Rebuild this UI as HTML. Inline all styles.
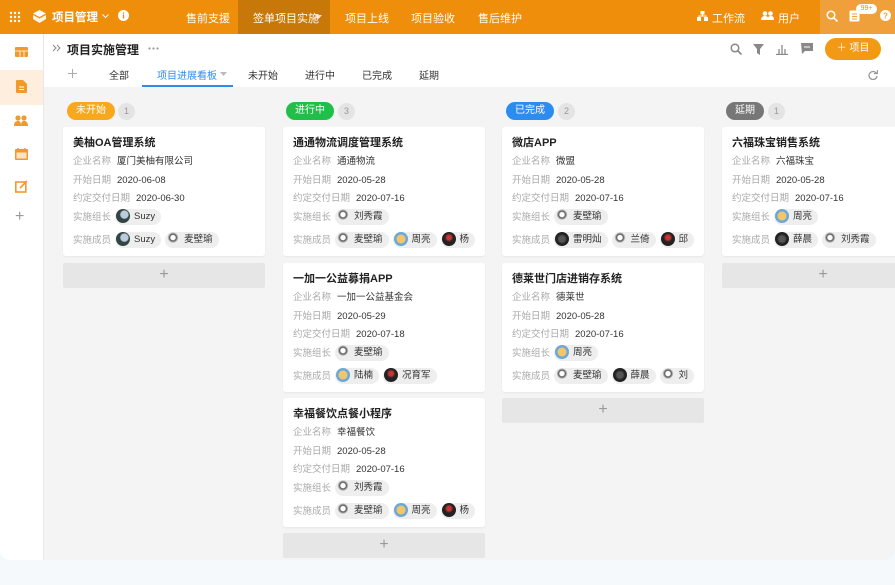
<!DOCTYPE html>
<html><head><meta charset="utf-8"><style>
*{margin:0;padding:0;box-sizing:border-box}
body{width:895px;height:585px;background:#f5f9fc;font-family:"Liberation Sans","Noto Sans CJK SC",sans-serif;position:relative;overflow:hidden;color:#333}
.win{position:absolute;left:0;top:0;width:895px;height:560px;background:#f4f4f4;border-radius:0 0 10px 10px;overflow:hidden}
.top{position:absolute;left:0;top:0;width:895px;height:34px;background:#ee8e0a;color:#fff;font-size:11px}
.top span{position:absolute;top:10px}
.side{position:absolute;left:0;top:34px;width:44px;height:526px;background:#fff;border-right:1px solid #e8e8e8}
.sub{position:absolute;left:44px;top:34px;width:851px;height:53px;background:#fff}
.a{position:absolute}
.pill{position:absolute;top:102px;height:18px;border-radius:9px;color:#fff;font-size:10px;line-height:18px;padding:0 9px}
.cnt{position:absolute;top:103px;width:17px;height:17px;border-radius:50%;background:#e4e4e4;color:#999;font-size:9px;text-align:center;line-height:17px}
.card{position:absolute;width:202px;height:129px;background:#fff;border-radius:3px;box-shadow:0 1px 2px rgba(0,0,0,.06)}
.card .t{position:absolute;left:10px;top:7px;font-size:11px;font-weight:bold;color:#222}
.card .r{position:absolute;left:10px;font-size:9.5px;color:#aaa;white-space:nowrap}
.card .r b{font-weight:normal;color:#333;margin-left:6px}
.chip{display:inline-block;height:16px;line-height:16px;background:#eee;border-radius:8px;padding:0 6px 0 1px;color:#333;font-size:9.5px;margin-left:4px;vertical-align:middle;white-space:nowrap}
.av{display:inline-block;width:14px;height:14px;border-radius:50%;vertical-align:middle;margin:-2px 4px 0 0}
.add{position:absolute;width:202px;height:25px;background:#e6e6e6;border-radius:2px;color:#999;font-size:16px;text-align:center;line-height:24px}
.r1{top:26px}.r2{top:45px}.r3{top:63px}.r4{top:82px}.r5{top:105px}
.g1{background:radial-gradient(circle at 60% 40%,#bcd 0 30%,#344 40%)}
.g2{background:radial-gradient(circle at 50% 40%,#fff 0 20%,#555 30%,#eee 50%)}
.g3{background:radial-gradient(circle,#f3c66a 0 40%,#6aa8d8 50%)}
.g4{background:radial-gradient(circle at 50% 40%,#c33 0 20%,#222 40%)}
.g5{background:radial-gradient(circle,#555 0 30%,#222 50%)}
</style></head><body>
<div class="win">
<div class="top">
<svg class="a" style="left:9px;top:11px" width="12" height="12"><g fill="#fff"><circle cx="2" cy="2" r="1.2"/><circle cx="6" cy="2" r="1.2"/><circle cx="10" cy="2" r="1.2"/><circle cx="2" cy="6" r="1.2"/><circle cx="6" cy="6" r="1.2"/><circle cx="10" cy="6" r="1.2"/><circle cx="2" cy="10" r="1.2"/><circle cx="6" cy="10" r="1.2"/><circle cx="10" cy="10" r="1.2"/></g></svg>
<svg class="a" style="left:32px;top:9px" width="15" height="15"><path d="M7.5 1L14 4.5 7.5 8 1 4.5z" fill="#fff"/><path d="M1 6l6.5 3.5L14 6v4l-6.5 4L1 10z" fill="#fff" opacity=".9"/></svg>
<span style="left:52px;top:9px;font-size:11.5px;font-weight:bold">项目管理</span>
<svg class="a" style="left:102px;top:14px" width="7" height="5"><path d="M.5.5l3 3 3-3" stroke="#fff" fill="none"/></svg>
<svg class="a" style="left:118px;top:10px" width="11" height="11"><circle cx="5.5" cy="5.5" r="5.5" fill="#fff"/><rect x="4.8" y="4.5" width="1.4" height="4" fill="#ee8e0a"/><circle cx="5.5" cy="3" r=".8" fill="#ee8e0a"/></svg>
<span style="left:186px">售前支援</span>
<div class="a" style="left:238px;top:0;width:92px;height:34px;background:#c77808"></div>
<span style="left:253px">签单项目实施</span>
<svg class="a" style="left:315px;top:15px" width="7" height="4"><path d="M0 0h7L3.5 4z" fill="#fff" opacity=".8"/></svg>
<span style="left:345px">项目上线</span>
<span style="left:411px">项目验收</span>
<span style="left:478px">售后维护</span>
<svg class="a" style="left:697px;top:11px" width="11" height="10"><rect x="3.5" y="0" width="4" height="3.5" fill="#fff"/><rect x="0" y="6" width="4" height="4" fill="#fff"/><rect x="7" y="6" width="4" height="4" fill="#fff"/><path d="M5.5 3.5v1.5M2 6V5h7v1" stroke="#fff" fill="none"/></svg>
<span style="left:712px">工作流</span>
<svg class="a" style="left:761px;top:11px" width="13" height="9"><circle cx="4" cy="2.5" r="2.3" fill="#fff"/><circle cx="9.5" cy="2.5" r="2.3" fill="#fff"/><path d="M0 9c0-3 2-4 4-4s4 1 4 4zM6 9c0-3 2-4 4-4s3 1 3 4z" fill="#fff"/></svg>
<span style="left:778px">用户</span>
<div class="a" style="left:820px;top:0;width:75px;height:34px;background:#f0a03a"></div>
<svg class="a" style="left:826px;top:10px" width="12" height="12"><circle cx="5" cy="5" r="3.8" stroke="#fff" stroke-width="1.5" fill="none"/><path d="M8 8l3.5 3.5" stroke="#fff" stroke-width="1.6"/></svg>
<svg class="a" style="left:849px;top:10px" width="11" height="12"><rect x=".5" y=".5" width="10" height="11" rx="1" fill="#fff"/><path d="M3 4h5M3 6.5h5M3 9h5" stroke="#f0a03a"/></svg>
<div class="a" style="left:856px;top:4px;width:21px;height:10px;background:#fff;border-radius:5px;color:#ee8e0a;font-size:7px;line-height:10px;text-align:center">99+</div>
<svg class="a" style="left:880px;top:10px" width="11" height="11"><circle cx="5.5" cy="5.5" r="5.5" fill="#fff"/><text x="5.5" y="8.5" font-size="8" font-weight="bold" text-anchor="middle" fill="#f0a03a" font-family="Liberation Sans">?</text></svg>
</div>
<div class="side">
<div class="a" style="left:0;top:36px;width:43px;height:35px;background:#fdeedd"></div>
<svg class="a" style="left:15px;top:13px" width="13" height="10"><rect width="13" height="10" rx="1" fill="#f09a2c"/><path d="M0 4h13M5 4v6M9 4v6" stroke="#fff" stroke-width=".8"/></svg>
<svg class="a" style="left:16px;top:46px" width="11" height="13"><path d="M0 1a1 1 0 0 1 1-1h6l4 4v8a1 1 0 0 1-1 1H1a1 1 0 0 1-1-1z" fill="#f09a2c"/><path d="M3 7h5M3 9.5h5" stroke="#fff"/></svg>
<svg class="a" style="left:14px;top:81px" width="14" height="11"><circle cx="4" cy="3" r="2.6" fill="#f09a2c"/><circle cx="10" cy="3" r="2.6" fill="#f09a2c"/><path d="M0 11c0-4 2-5 4-5s3 1 3 5zM7 11c0-4 1-5 3-5s4 1 4 5z" fill="#f09a2c"/></svg>
<svg class="a" style="left:15px;top:114px" width="13" height="12"><rect y="1" width="13" height="11" rx="1" fill="#f09a2c"/><rect x="1.5" y="4.5" width="10" height="6" fill="#fde3c4"/><path d="M3 0v3M10 0v3" stroke="#f09a2c" stroke-width="1.4"/></svg>
<svg class="a" style="left:15px;top:146px" width="13" height="13"><rect x=".8" y="2" width="10" height="10" fill="none" stroke="#f09a2c" stroke-width="1.6"/><path d="M5 8l7-7" stroke="#f09a2c" stroke-width="1.6"/></svg>
<div class="a" style="left:15px;top:174px;color:#999;font-size:16px">+</div>
</div>
<div class="sub">
<svg class="a" style="left:8px;top:10px" width="10" height="8"><path d="M1 1l3 3-3 3M5 1l3 3-3 3" stroke="#888" fill="none"/></svg>
<span class="a" style="left:23px;top:7px;font-size:12px;font-weight:bold;color:#222">项目实施管理</span>
<svg class="a" style="left:104px;top:13px" width="11" height="3"><circle cx="1.5" cy="1.5" r="1.1" fill="#999"/><circle cx="5.5" cy="1.5" r="1.1" fill="#999"/><circle cx="9.5" cy="1.5" r="1.1" fill="#999"/></svg>
<svg class="a" style="left:686px;top:9px" width="12" height="12"><circle cx="5" cy="5" r="3.8" stroke="#888" stroke-width="1.5" fill="none"/><path d="M8 8l3.5 3.5" stroke="#888" stroke-width="1.6"/></svg>
<svg class="a" style="left:709px;top:10px" width="11" height="11"><path d="M0 0h11L7 5v6L4 9V5z" fill="#888"/></svg>
<svg class="a" style="left:732px;top:9px" width="12" height="12"><path d="M0 11.5h12M3 11V6M6 11V2M9 11V6" stroke="#888" stroke-width="1.3"/></svg>
<svg class="a" style="left:757px;top:9px" width="12" height="11"><path d="M0 0h12v8H4l-3 3z" fill="#888"/><path d="M3 4h6" stroke="#fff"/></svg>
<div class="a" style="left:781px;top:4px;width:56px;height:22px;background:#f29a16;border-radius:11px;color:#fff;font-size:10px;line-height:22px;text-align:center">＋ 项目</div>
<svg class="a" style="left:24px;top:35px" width="9" height="9"><path d="M4.5 0v9M0 4.5h9" stroke="#aaa"/></svg>
<span class="a" style="left:65px;top:33px;font-size:10px">全部</span>
<span class="a" style="left:113px;top:33px;font-size:10px;color:#2d8cf0">项目进展看板</span>
<svg class="a" style="left:176px;top:38px" width="7" height="4"><path d="M0 0h7L3.5 4z" fill="#bbb"/></svg>
<div class="a" style="left:98px;top:51px;width:91px;height:2px;background:#2d8cf0"></div>
<span class="a" style="left:204px;top:33px;font-size:10px">未开始</span>
<span class="a" style="left:261px;top:33px;font-size:10px">进行中</span>
<span class="a" style="left:318px;top:33px;font-size:10px">已完成</span>
<span class="a" style="left:375px;top:33px;font-size:10px">延期</span>
<svg class="a" style="left:824px;top:36px" width="10" height="10"><path d="M8.5 3.5A4 4 0 1 0 9 6" stroke="#999" stroke-width="1.3" fill="none"/><path d="M6 3.5h3.5V0" stroke="#999" stroke-width="1.3" fill="none"/></svg>
</div>

<div class="pill" style="left:67px;background:#f7a81c">未开始</div><div class="cnt" style="left:118px">1</div>
<div class="pill" style="left:286px;background:#1fbf4a">进行中</div><div class="cnt" style="left:338px">3</div>
<div class="pill" style="left:506px;background:#2d8cf0">已完成</div><div class="cnt" style="left:558px">2</div>
<div class="pill" style="left:726px;background:#777">延期</div><div class="cnt" style="left:768px">1</div>

<div class="card" style="left:63px;top:127px"><div class="t">美柚OA管理系统</div>
<div class="r r1">企业名称<b>厦门美柚有限公司</b></div><div class="r r2">开始日期<b>2020-06-08</b></div><div class="r r3">约定交付日期<b>2020-06-30</b></div>
<div class="r r4">实施组长<span class="chip"><i class="av g1"></i>Suzy</span></div>
<div class="r r5">实施成员<span class="chip"><i class="av g1"></i>Suzy</span><span class="chip"><i class="av g2"></i>麦壁瑜</span></div></div>
<div class="add" style="left:63px;top:263px">+</div>

<div class="card" style="left:283px;top:127px"><div class="t">通通物流调度管理系统</div>
<div class="r r1">企业名称<b>通通物流</b></div><div class="r r2">开始日期<b>2020-05-28</b></div><div class="r r3">约定交付日期<b>2020-07-16</b></div>
<div class="r r4">实施组长<span class="chip"><i class="av g2"></i>刘秀霞</span></div>
<div class="r r5" style="width:188px;overflow:hidden">实施成员<span class="chip"><i class="av g2"></i>麦壁瑜</span><span class="chip"><i class="av g3"></i>周亮</span><span class="chip"><i class="av g4"></i>杨</span></div></div>
<div class="card" style="left:283px;top:263px"><div class="t">一加一公益募捐APP</div>
<div class="r r1">企业名称<b>一加一公益基金会</b></div><div class="r r2">开始日期<b>2020-05-29</b></div><div class="r r3">约定交付日期<b>2020-07-18</b></div>
<div class="r r4">实施组长<span class="chip"><i class="av g2"></i>麦壁瑜</span></div>
<div class="r r5">实施成员<span class="chip"><i class="av g3"></i>陆楠</span><span class="chip"><i class="av g4"></i>况育军</span></div></div>
<div class="card" style="left:283px;top:398px"><div class="t">幸福餐饮点餐小程序</div>
<div class="r r1">企业名称<b>幸福餐饮</b></div><div class="r r2">开始日期<b>2020-05-28</b></div><div class="r r3">约定交付日期<b>2020-07-16</b></div>
<div class="r r4">实施组长<span class="chip"><i class="av g2"></i>刘秀霞</span></div>
<div class="r r5" style="width:188px;overflow:hidden">实施成员<span class="chip"><i class="av g2"></i>麦壁瑜</span><span class="chip"><i class="av g3"></i>周亮</span><span class="chip"><i class="av g4"></i>杨</span></div></div>
<div class="add" style="left:283px;top:533px">+</div>

<div class="card" style="left:502px;top:127px"><div class="t">微店APP</div>
<div class="r r1">企业名称<b>微盟</b></div><div class="r r2">开始日期<b>2020-05-28</b></div><div class="r r3">约定交付日期<b>2020-07-16</b></div>
<div class="r r4">实施组长<span class="chip"><i class="av g2"></i>麦壁瑜</span></div>
<div class="r r5" style="width:188px;overflow:hidden">实施成员<span class="chip"><i class="av g5"></i>雷明灿</span><span class="chip"><i class="av g2"></i>兰倚</span><span class="chip"><i class="av g4"></i>邱</span></div></div>
<div class="card" style="left:502px;top:263px"><div class="t">德莱世门店进销存系统</div>
<div class="r r1">企业名称<b>德莱世</b></div><div class="r r2">开始日期<b>2020-05-28</b></div><div class="r r3">约定交付日期<b>2020-07-16</b></div>
<div class="r r4">实施组长<span class="chip"><i class="av g3"></i>周亮</span></div>
<div class="r r5" style="width:188px;overflow:hidden">实施成员<span class="chip"><i class="av g2"></i>麦壁瑜</span><span class="chip"><i class="av g5"></i>薛晨</span><span class="chip"><i class="av g2"></i>刘</span></div></div>
<div class="add" style="left:502px;top:398px">+</div>

<div class="card" style="left:722px;top:127px"><div class="t">六福珠宝销售系统</div>
<div class="r r1">企业名称<b>六福珠宝</b></div><div class="r r2">开始日期<b>2020-05-28</b></div><div class="r r3">约定交付日期<b>2020-07-16</b></div>
<div class="r r4">实施组长<span class="chip"><i class="av g3"></i>周亮</span></div>
<div class="r r5">实施成员<span class="chip"><i class="av g5"></i>薛晨</span><span class="chip"><i class="av g2"></i>刘秀霞</span></div></div>
<div class="add" style="left:722px;top:263px">+</div>
</div>
</body></html>
